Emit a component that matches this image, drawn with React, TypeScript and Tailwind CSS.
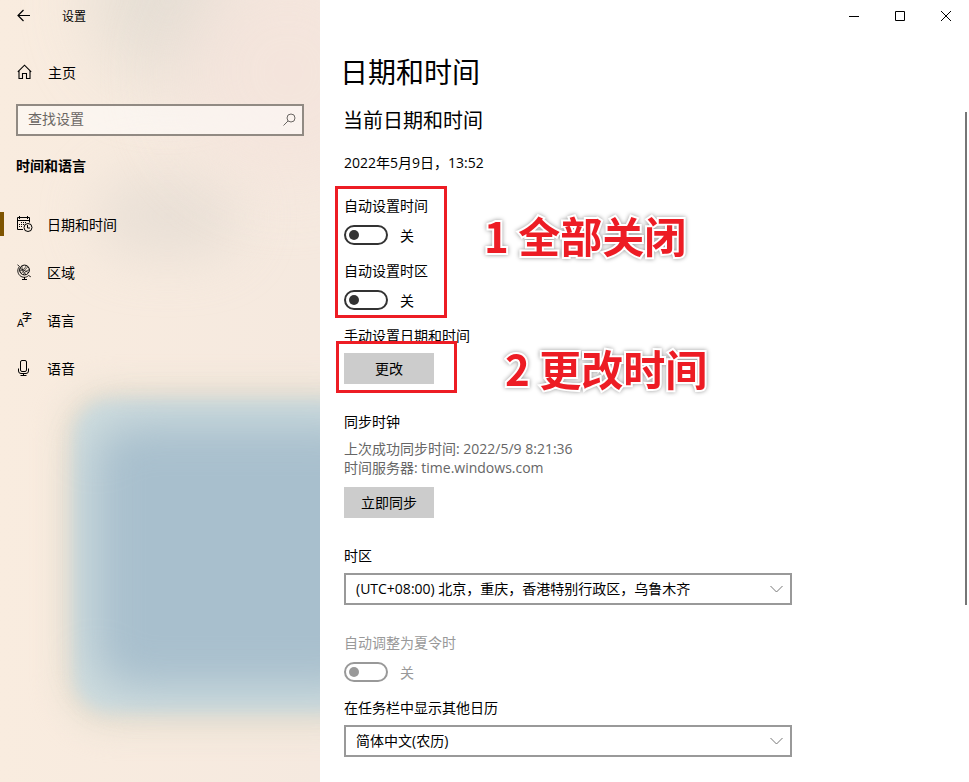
import { useState } from "react";
import type { ReactNode } from "react";

interface NavItem {
  id: string;
  label: string;
  icon: ReactNode;
}

const navItems: NavItem[] = [
  { id: "datetime", label: "日期和时间", icon: <CalendarIcon /> },
  { id: "region", label: "区域", icon: <GlobeIcon /> },
  { id: "language", label: "语言", icon: <LanguageIcon /> },
  { id: "speech", label: "语音", icon: <MicIcon /> },
];

function CalendarIcon() {
  return (
    <svg width="16" height="16" viewBox="0 0 16 16" fill="none" stroke="currentColor" aria-hidden="true">
      <path d="M6 13.5H.5v-12h12v5M.5 4.5h12M2.500 0v3M10.500 0v3" />
      <path d="M4 6.500h1M6 6.500h1M8 6.500h1M2 8.500h1M4 8.500h1M6 8.500h1M2 10.500h1M4 10.500h1" />
      <circle cx="11" cy="11.500" r="4" />
      <path d="M10.500 9v3H13" />
    </svg>
  );
}

function GlobeIcon() {
  return (
    <svg width="16" height="16" viewBox="0 0 16 16" fill="none" stroke="currentColor" aria-hidden="true">
      <circle cx="7.500" cy="6" r="4.900" />
      <path d="M3 4.500l8.500 4M4.200 9.500L11 2.700M5.200 1.600c-.8 3 .6 6.800 4 9M2.800 7c2.200-.2 5.400-2.400 6.800-5.600M6.400 10.800c.8-2.400 3-4.400 6-5" strokeWidth="0.700" />
      <path d="M.5.800l2 1.700C.1 5 .3 9 2.800 11.500c2.600 2.400 6.400 2.400 8.800 0l2.200 1.300" strokeWidth="0.900" />
      <path d="M7.500 13v2.500M5 15.500h5" />
    </svg>
  );
}

function LanguageIcon() {
  return (
    <svg className="overflow-visible" width="16" height="16" viewBox="0 0 16 16" fill="currentColor" aria-hidden="true">
      <text x="0" y="15" fontSize="11" fontFamily="Open Sans, sans-serif">A</text>
      <text x="5" y="9" fontSize="10" fontWeight="500" fontFamily="Noto Sans CJK SC, sans-serif">字</text>
    </svg>
  );
}

function MicIcon() {
  return (
    <svg width="16" height="16" viewBox="0 0 16 16" fill="none" stroke="currentColor" aria-hidden="true">
      <rect x="3.500" y="0.500" width="6" height="11" rx="1.500" />
      <path d="M1.500 8.500v2.500a2.500 2.500 0 0 0 2.500 2.500h5a2.500 2.500 0 0 0 2.500-2.500V8.500M6.500 13.500v2M3.500 15.500h6" />
    </svg>
  );
}

function HomeIcon() {
  return (
    <svg width="16" height="16" viewBox="0 0 16 16" fill="none" stroke="currentColor" strokeWidth="1.100" aria-hidden="true">
      <path d="M.8 7.800L7.500 1.200l6.700 6.600M2 7v7.500h3.500v-5h4v5H13V7" />
    </svg>
  );
}

function Toggle({ id, label, disabled }: { id: string; label: string; disabled?: boolean }) {
  const [on, setOn] = useState(false);

  return (
    <div className={disabled ? "text-[#999]" : "text-black"}>
      <label htmlFor={id} className="block">{label}</label>
      <div className="mt-[9px] flex h-5 items-center gap-3">
        <input
          id={id}
          type="checkbox"
          role="switch"
          checked={on}
          disabled={disabled}
          onChange={(e) => setOn(e.target.checked)}
          className="flex h-5 w-11 appearance-none items-center rounded-full border-2 border-[#333] px-[3px] before:size-[10px] before:rounded-full before:bg-[#333] checked:justify-end disabled:border-[#999] disabled:before:bg-[#999]"
        />
        <span className="pt-[2px]">{on ? "开" : "关"}</span>
      </div>
    </div>
  );
}

function SelectField({ id, label, options }: { id: string; label: string; options: string[] }) {
  return (
    <div>
      <label htmlFor={id} className="block">{label}</label>
      <div className="relative mt-[7px] max-w-[448px]">
        <select id={id} className="block h-8 w-full appearance-none border-2 border-[#999] bg-white pr-9 pl-[10px]">
          {options.map((o) => (
            <option key={o}>{o}</option>
          ))}
        </select>
        <svg className="pointer-events-none absolute top-3 right-[9px]" width="13" height="8" viewBox="0 0 13 8" fill="none" stroke="#777" aria-hidden="true">
          <path d="M.5 1l6 6 6-6" />
        </svg>
      </div>
    </div>
  );
}

function Callout({ children }: { children: ReactNode }) {
  return (
    <span className="block text-[42px] leading-[48px] font-bold whitespace-nowrap text-[#ed1c24] drop-shadow-[0_0_2px_rgba(0,0,0,0.4)] [-webkit-text-stroke:4px_white] [font-family:'Noto_Sans_CJK_SC',sans-serif] [paint-order:stroke_fill]">
      {children}
    </span>
  );
}

function Sidebar() {
  const [active, setActive] = useState("datetime");

  return (
    <aside className="relative isolate w-80 shrink-0 overflow-hidden bg-linear-to-r from-[#f9ecdf] to-[#f5e9df]">
      {/* Blurred wallpaper behind the panel */}
      <div className="absolute -top-20 left-24 -z-10 h-40 w-36 rounded-full bg-[#dcd8cf] opacity-70 blur-[36px]" />
      <div className="absolute top-44 left-24 -z-10 h-20 w-36 rounded-full bg-[#dfd8d0] opacity-60 blur-[28px]" />
      <div className="absolute -top-10 -right-20 -z-10 size-56 rounded-full bg-[#f4e4dc] opacity-80 blur-[36px]" />
      <div className="absolute top-[385px] -right-16 left-[60px] -z-10 h-[345px] rounded-[50px] bg-[#e8e0d2] blur-[14px]" />
      <div className="absolute top-[400px] -right-16 left-[74px] -z-10 h-[312px] rounded-[36px] bg-[#cedcde] blur-[8px]" />
      <div className="absolute top-[424px] -right-16 left-[94px] -z-10 h-[264px] rounded-[40px] bg-[#a8bfcd] blur-[22px]" />

      <div className="flex h-8 items-center">
        <button aria-label="返回" className="flex h-8 w-12 items-center justify-center">
          <svg width="14" height="14" viewBox="0 0 14 14" fill="none" stroke="currentColor" strokeWidth="1.200" aria-hidden="true">
            <path d="M13 6.500H1M6.500 1L1 6.500 6.500 12" />
          </svg>
        </button>
        <span className="ml-[14px] pt-[2px] text-xs">设置</span>
      </div>

      <a href="#home" className="mt-5 flex h-10 items-center gap-[15px] pl-[17px]">
        <HomeIcon />
        <span className="pt-[2px]">主页</span>
      </a>

      <div className="relative mx-4 mt-3">
        <input
          type="search"
          aria-label="查找设置"
          placeholder="查找设置"
          className="block h-8 w-full border-2 border-[#918a83] bg-white/50 pr-8 pb-1 pl-[10px] placeholder:text-[#6b6764]"
        />
        <svg className="pointer-events-none absolute top-[9px] right-[8px]" width="13" height="14" viewBox="0 0 13 14" fill="none" stroke="#6b6764" aria-hidden="true">
          <circle cx="8" cy="5" r="4" />
          <path d="M5 8L.5 12.500" />
        </svg>
      </div>

      <h2 className="mt-5 pl-4 font-bold">时间和语言</h2>

      <nav className="mt-6">
        {navItems.map((item) => (
          <a
            key={item.id}
            href={`#${item.id}`}
            onClick={() => setActive(item.id)}
            className="flex h-12 items-center"
          >
            <span className={`h-6 w-1 ${active === item.id ? "bg-[#7e5400]" : ""}`} />
            <span className="ml-[13px]">{item.icon}</span>
            <span className="ml-[14px] pt-[2px]">{item.label}</span>
          </a>
        ))}
      </nav>
    </aside>
  );
}

export default function App() {
  return (
    <div className="flex min-h-screen bg-white text-sm leading-5 text-black [font-family:'Open_Sans','Noto_Sans_CJK_SC',sans-serif]">
      <Sidebar />

      <main className="relative min-w-0 flex-1">
        {/* Window controls */}
        <div className="flex h-8 justify-end">
          <button aria-label="最小化" className="flex w-[46px] items-center justify-center">
            <svg width="10" height="10" viewBox="0 0 10 10" stroke="currentColor" aria-hidden="true">
              <path d="M0 5.500h10" />
            </svg>
          </button>
          <button aria-label="最大化" className="flex w-[46px] items-center justify-center">
            <svg width="10" height="10" viewBox="0 0 10 10" fill="none" stroke="currentColor" aria-hidden="true">
              <path d="M.5.5h9v9h-9z" />
            </svg>
          </button>
          <button aria-label="关闭" className="flex w-[46px] items-center justify-center">
            <svg width="10" height="10" viewBox="0 0 10 10" stroke="currentColor" aria-hidden="true">
              <path d="M0 0l10 10M10 0L0 10" />
            </svg>
          </button>
        </div>

        <div className="px-6 pb-6">
          <h1 className="-ml-1 pt-5 text-[28px] leading-10">日期和时间</h1>
          <h2 className="-ml-px mt-[15px] text-xl leading-7">当前日期和时间</h2>
          <p className="mt-[18px]">2022年5月9日，13:52</p>

          <div className="relative mt-[23px] space-y-4">
            <Toggle id="auto-time" label="自动设置时间" />
            <Toggle id="auto-zone" label="自动设置时区" />
            <div className="pointer-events-none absolute -top-[10px] -left-[9px] h-[132px] w-28 border-3 border-[#ed1c24]" />
            <div className="absolute top-[15px] left-[140px]">
              <Callout>1 全部关闭</Callout>
            </div>
          </div>

          <div className="relative mt-4">
            <p>手动设置日期和时间</p>
            <button className="mt-[7px] block h-[31px] w-[90px] bg-[#ccc]">更改</button>
            <div className="pointer-events-none absolute top-[15px] -left-2 h-[52px] w-[121px] border-3 border-[#ed1c24]" />
            <div className="absolute top-[18px] left-[161px]">
              <Callout>2 更改时间</Callout>
            </div>
          </div>

          <h3 className="mt-7">同步时钟</h3>
          <div className="mt-[7px] leading-[19px] text-[#666]">
            <p>上次成功同步时间: 2022/5/9 8:21:36</p>
            <p>时间服务器: time.windows.com</p>
          </div>
          <button className="mt-[10px] mb-7 block h-[31px] w-[90px] bg-[#ccc]">立即同步</button>

          <SelectField id="zone" label="时区" options={["(UTC+08:00) 北京，重庆，香港特别行政区，乌鲁木齐"]} />
          <div className="mt-7 mb-4">
            <Toggle id="dst" label="自动调整为夏令时" disabled />
          </div>
          <SelectField id="calendar" label="在任务栏中显示其他日历" options={["简体中文(农历)"]} />
        </div>

        {/* Scroll position */}
        <div className="absolute top-28 right-[2px] h-[493px] w-[2px] bg-[#767676]" />
      </main>
    </div>
  );
}
